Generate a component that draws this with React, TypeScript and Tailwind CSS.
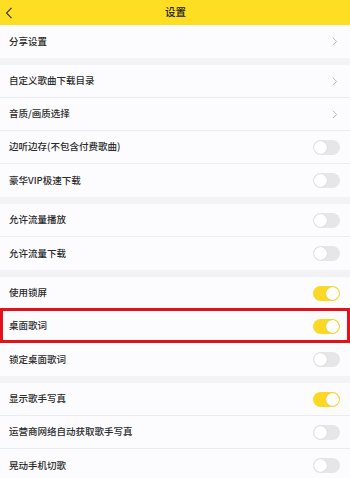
const groups: { label: string; kind: "link" | "on" | "off"; marked?: boolean }[][] = [
  [{ label: "分享设置", kind: "link" }],
  [
    { label: "自定义歌曲下载目录", kind: "link" },
    { label: "音质/画质选择", kind: "link" },
    { label: "边听边存(不包含付费歌曲)", kind: "off" },
    { label: "豪华VIP极速下载", kind: "off" },
  ],
  [
    { label: "允许流量播放", kind: "off" },
    { label: "允许流量下载", kind: "off" },
  ],
  [
    { label: "使用锁屏", kind: "on" },
    { label: "桌面歌词", kind: "on", marked: true },
    { label: "锁定桌面歌词", kind: "off" },
  ],
  [
    { label: "显示歌手写真", kind: "on" },
    { label: "运营商网络自动获取歌手写真", kind: "off" },
    { label: "晃动手机切歌", kind: "off" },
  ],
];

function Toggle({ on }: { on: boolean }) {
  return (
    <div
      className={`flex items-center w-[27px] h-[15px] rounded-full px-px ${
        on ? "bg-[#fcd826] justify-end" : "bg-[#e6e6e8] justify-start"
      }`}
    >
      <div className="w-[13px] h-[13px] rounded-full bg-white shadow-[0_0_1px_rgba(0,0,0,0.2)]" />
    </div>
  );
}

function Chevron() {
  return (
    <svg width="6" height="9" viewBox="0 0 6 9" className="mr-[2px]">
      <path d="M1 0.8 L4.6 4.5 L1 8.2" fill="none" stroke="#b5b5b8" strokeWidth="1" />
    </svg>
  );
}

export default function App() {
  return (
    <div
      className="w-[350px] h-[478px] overflow-hidden bg-[#f3f3f5] text-[#2a2a2a]"
      style={{ fontFamily: '"Noto Sans CJK SC", "Noto Sans", sans-serif' }}
    >
      <header className="relative h-[25px] bg-[#fede22] flex items-center justify-center">
        <svg width="8" height="12" viewBox="0 0 8 12" className="absolute left-[5px] top-[7px]">
          <path d="M6.5 0.8 L1.5 6 L6.5 11.2" fill="none" stroke="#333" strokeWidth="1.1" />
        </svg>
        <span className="text-[10.5px] leading-none font-medium text-[#222] ml-[1px]">设置</span>
      </header>

      <div className="flex flex-col gap-[7px]">
        {groups.map((group, gi) => (
          <div key={gi} className="bg-[#fcfcfe]">
            {group.map((item, i) => (
              <div
                key={item.label}
                className={`relative flex items-center justify-between h-[33px] pl-[9px] pr-[10px] ${
                  i < group.length - 1 ? "border-b border-[#ececee]" : "h-[32px]"
                }`}
              >
                <span className="text-[9.5px] leading-none font-medium">{item.label}</span>
                {item.kind === "link" ? <Chevron /> : <Toggle on={item.kind === "on"} />}
                {item.marked && (
                  <div className="absolute left-0 right-0 top-[-2px] bottom-[-1px] border-[3px] border-[#e3111b] pointer-events-none" />
                )}
              </div>
            ))}
          </div>
        ))}
      </div>
    </div>
  );
}
